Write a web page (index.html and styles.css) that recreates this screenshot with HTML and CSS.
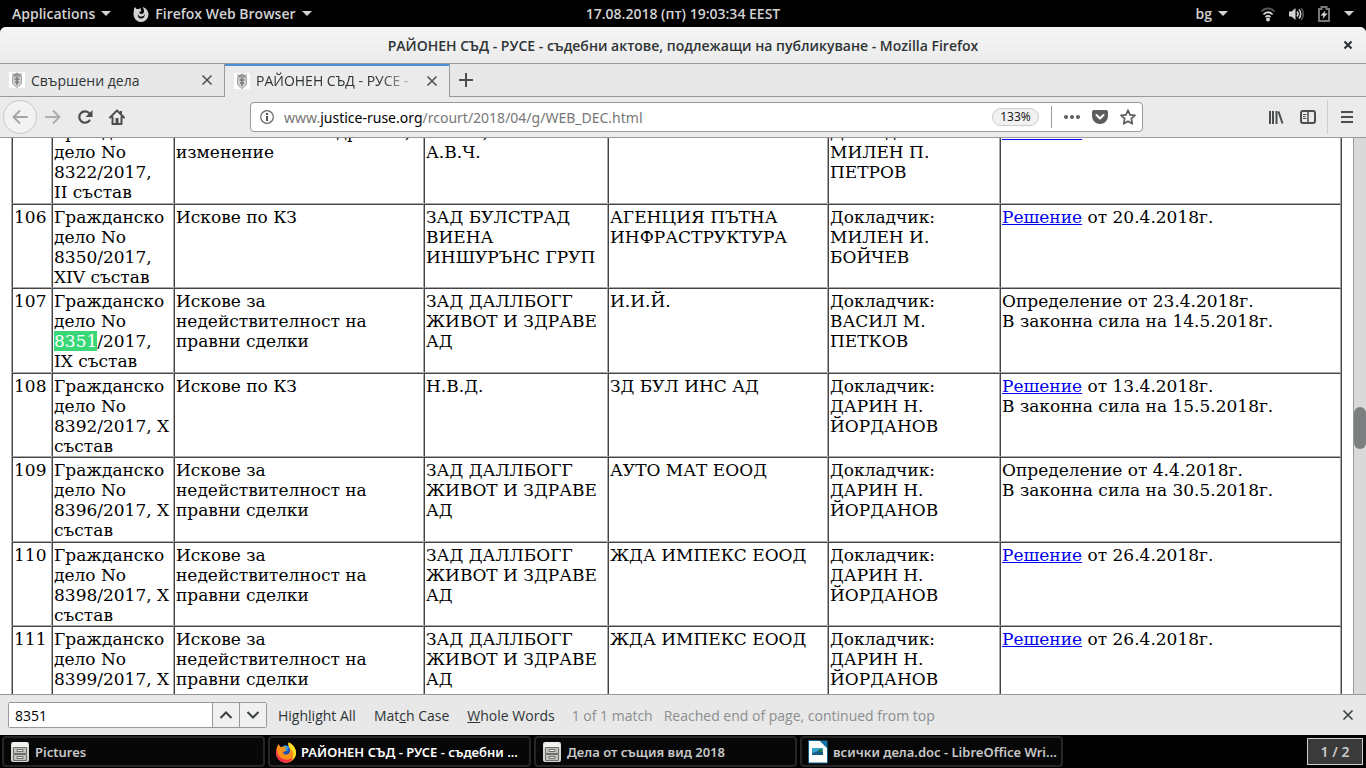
FILE: index.html
```html
<!DOCTYPE html>
<html lang="bg">
<head>
  <meta charset="UTF-8">
  <title>РАЙОНЕН СЪД - РУСЕ - съдебни актове, подлежащи на публикуване</title>
  <link rel="stylesheet" href="styles.css">
</head>
<body>
  <header class="top-panel">
    <div class="panel-side">
      <button class="panel-btn">Applications <span class="caret"></span></button>
      <button class="panel-btn">
        <svg width="16" height="16" viewBox="0 0 16 16"><path fill="#d3d3d3" d="M1 3l1-2 1.500 2h2.500l2-1.500-.5 2 1 1.500-2 1v1.500l2.500.5c1.500-.5 2-1.500 2-3 0-2-1-3-1.500-4C13 2 15.500 4.500 15.500 8.500a7.500 7.500 0 0 1-15 0C.5 6 1 5 1 3z"/><path fill="#000" d="M5 8c.5 2 2 3 4 2.500S11.500 9 12 7.500c0 3-1.500 5-4 5S4.500 10.500 5 8z"/></svg>
        Firefox Web Browser <span class="caret"></span>
      </button>
    </div>
    <div class="clock">17.08.2018 (пт) 19:03:34 EEST</div>
    <div class="panel-side panel-right">
      <button class="panel-btn lang">bg <span class="caret"></span></button>
      <button class="panel-btn status">
        <svg width="16" height="16" viewBox="0 0 16 16" fill="none" stroke-width="1.800"><path stroke="#555" d="M1.500 5.500c3.500-4 9.500-4 13 0"/><path stroke="#d3d3d3" d="M3.500 8.500c2.500-3 6.500-3 9 0M5.500 11c1.500-1.500 3.500-1.500 5 0"/><circle cx="8" cy="13.500" r="2" fill="#d3d3d3"/></svg>
        <svg width="16" height="16" viewBox="0 0 16 16" fill="none" stroke-width="1.600"><path fill="#d3d3d3" d="M1 5.500h2.500L7.500 2v12L3.500 10.500H1z"/><path stroke="#d3d3d3" d="M9 5.500c1.300 1.500 1.300 3.500 0 5M11 3.500c2.300 2.500 2.300 6.500 0 9"/><path stroke="#555" d="M13 2c3 3.500 3 8.500 0 12"/></svg>
        <svg width="16" height="18" viewBox="0 0 16 18"><path fill="none" stroke="#777" stroke-width="2" d="M3 4h2.500V2h5v2H13v12H3z"/><path fill="#ddd" d="M9.500 5.500L4.500 10.500h3L6.500 14l5-5.500h-3z"/></svg>
        <span class="caret"></span>
      </button>
    </div>
  </header>

  <main class="window">
    <div class="titlebar">
      <span class="window-title">РАЙОНЕН СЪД - РУСЕ - съдебни актове, подлежащи на публикуване - Mozilla Firefox</span>
      <button class="window-close" aria-label="Close window">
        <svg width="10" height="10" viewBox="0 0 10 10"><path stroke="#2e3436" stroke-width="2.200" d="M1.500 1.500l7 7M8.500 1.500l-7 7"/></svg>
      </button>
    </div>

    <nav class="tabs">
      <div class="tab">
        <svg class="favicon" width="16" height="16" viewBox="0 0 16 16"><path fill="#fff" d="M0 0h16v16H0z"/><path fill="#d0d0d0" stroke="#a5a5a5" d="M3.500 4.500h9V10c0 3-2.500 4-4.500 5.500C6 14 3.500 13 3.500 10z"/><path fill="#999" d="M3 1l2 1 3-1.500L11 2l2-1-1 3H4z"/><path stroke="#777" stroke-width="1.500" d="M8 5v8M5.500 7h5M6 10h4"/></svg>
        <a class="tab-label" href="#">Свършени дела</a>
        <button class="tab-close" aria-label="Close tab"><svg width="12" height="12" viewBox="0 0 12 12"><path stroke="#4c4f50" stroke-width="1.500" d="M1.500 1.500l9 9M10.500 1.500l-9 9"/></svg></button>
      </div>
      <div class="tab active">
        <svg class="favicon" width="16" height="16" viewBox="0 0 16 16"><path fill="#fff" d="M0 0h16v16H0z"/><path fill="#d0d0d0" stroke="#a5a5a5" d="M3.500 4.500h9V10c0 3-2.500 4-4.500 5.500C6 14 3.500 13 3.500 10z"/><path fill="#999" d="M3 1l2 1 3-1.500L11 2l2-1-1 3H4z"/><path stroke="#777" stroke-width="1.500" d="M8 5v8M5.500 7h5M6 10h4"/></svg>
        <a class="tab-label fade" href="#">РАЙОНЕН СЪД - РУСЕ -</a>
        <button class="tab-close" aria-label="Close tab"><svg width="12" height="12" viewBox="0 0 12 12"><path stroke="#4c4f50" stroke-width="1.500" d="M1.500 1.500l9 9M10.500 1.500l-9 9"/></svg></button>
      </div>
      <div class="tab-rest">
        <button class="icon-btn" aria-label="New tab"><svg width="14" height="14" viewBox="0 0 14 14"><path stroke="#4c4f50" stroke-width="2" d="M0 7h14M7 0v14"/></svg></button>
      </div>
    </nav>

    <div class="toolbar">
      <div class="nav-buttons">
        <button class="icon-btn back" aria-label="Back"><svg width="16" height="16" viewBox="0 0 16 16" fill="none" stroke="#a5a5a5" stroke-width="2" stroke-linecap="round" stroke-linejoin="round"><path d="M15 8H1.500M7.500 2l-6 6 6 6"/></svg></button>
        <button class="icon-btn" aria-label="Forward"><svg width="16" height="16" viewBox="0 0 16 16" fill="none" stroke="#adadad" stroke-width="2" stroke-linecap="round" stroke-linejoin="round"><path d="M1 8h13.500M8.500 2l6 6-6 6"/></svg></button>
        <button class="icon-btn" aria-label="Reload"><svg width="16" height="16" viewBox="0 0 16 16"><path fill="none" stroke="#4c4f50" stroke-width="2.200" stroke-linecap="round" d="M12.500 11.500A5.700 5.700 0 1 1 12 4"/><path fill="#4c4f50" d="M15.500 1v7h-7z"/></svg></button>
        <button class="icon-btn" aria-label="Home"><svg width="16" height="16" viewBox="0 0 16 16"><path fill="none" stroke="#4c4f50" stroke-width="2" stroke-linecap="round" stroke-linejoin="round" d="M1 8.500l7-7 7 7M3.500 8v7h9V8"/><path fill="#4c4f50" d="M6.500 9h3v6h-3zM11 2h2v4h-2z"/></svg></button>
      </div>
      <div class="url-box">
        <svg width="14" height="14" viewBox="0 0 14 14"><circle cx="7" cy="7" r="6.300" fill="none" stroke="#666" stroke-width="1.200"/><path fill="#555" d="M6 6h2v5H6zM6 3h2v2H6z"/></svg>
        <div class="url" role="textbox" aria-label="Address" tabindex="0">www.<b>justice-ruse.org</b>/rcourt/2018/04/g/WEB_DEC.html</div>
        <button class="zoom-level">133%</button>
        <span class="url-split"></span>
        <button class="icon-btn" aria-label="Page actions"><svg width="16" height="16" viewBox="0 0 16 16" fill="#5c5c5c"><circle cx="2" cy="8" r="2"/><circle cx="8" cy="8" r="2"/><circle cx="14" cy="8" r="2"/></svg></button>
        <button class="icon-btn" aria-label="Save to Pocket"><svg width="16" height="16" viewBox="0 0 16 16"><path fill="#5c5c5c" d="M2 1h12a2 2 0 0 1 2 2v4a8 8 0 0 1-16 0V3a2 2 0 0 1 2-2z"/><path fill="none" stroke="#fff" stroke-width="2" stroke-linecap="round" stroke-linejoin="round" d="M4.500 6L8 9.500 11.500 6"/></svg></button>
        <button class="icon-btn" aria-label="Bookmark"><svg width="16" height="16" viewBox="0 0 16 16"><path fill="none" stroke="#5c5c5c" stroke-width="1.700" stroke-linejoin="round" d="M8 1.200l2 4.600 5 .5-3.700 3.400 1 5L8 12.200l-4.300 2.500 1-5L1 6.300l5-.5z"/></svg></button>
      </div>
      <div class="menu-buttons">
        <button class="icon-btn" aria-label="Library"><svg width="16" height="16" viewBox="0 0 16 16" fill="none" stroke="#4c4f50" stroke-width="2"><path d="M2 2v13M5 2v13M8.500 2v13M10.500 2.500l4 12"/></svg></button>
        <button class="icon-btn" aria-label="Sidebars"><svg width="16" height="16" viewBox="0 0 16 16" fill="none" stroke="#4c4f50"><rect x="1" y="2" width="14" height="12" rx="2" stroke-width="2"/><path stroke-width="1.500" d="M8 2v12"/><path d="M3 5.500h3.500M3 7.500h2.500M3 9.500h3.500"/></svg></button>
        <button class="icon-btn menu" aria-label="Menu"><svg width="12" height="12" viewBox="0 0 12 12" stroke="#4c4f50" stroke-width="2"><path d="M0 1h12M0 6h12M0 11h12"/></svg></button>
      </div>
    </div>

    <div class="viewport">
      <div class="page">
        <table class="cases">
          <colgroup><col class="c-num"><col class="c-case"><col class="c-subject"><col class="c-plaintiff"><col class="c-defendant"><col class="c-judge"><col></colgroup>
          <tbody>
            <tr>
              <td></td>
              <td>Гражданско дело No 8322/2017, II&nbsp;състав</td>
              <td>Искове по СК - издръжка, изменение</td>
              <td>Н.В.Ч.,<br>А.В.Ч.</td>
              <td></td>
              <td>Докладчик: МИЛЕН П. ПЕТРОВ</td>
              <td><a href="#">Решение</a></td>
            </tr>
            <tr>
              <td>106</td>
              <td>Гражданско дело No 8350/2017, XIV състав</td>
              <td>Искове по КЗ</td>
              <td>ЗАД БУЛСТРАД ВИЕНА ИНШУРЪНС ГРУП</td>
              <td>АГЕНЦИЯ ПЪТНА ИНФРАСТРУКТУРА</td>
              <td>Докладчик: МИЛЕН И. БОЙЧЕВ</td>
              <td><a href="#">Решение</a> от 20.4.2018г.</td>
            </tr>
            <tr>
              <td>107</td>
              <td>Гражданско дело No <mark>8351</mark>/2017, IX състав</td>
              <td>Искове за недействителност на правни сделки</td>
              <td>ЗАД ДАЛЛБОГГ ЖИВОТ И ЗДРАВЕ АД</td>
              <td>И.И.Й.</td>
              <td>Докладчик: ВАСИЛ М. ПЕТКОВ</td>
              <td>Определение от 23.4.2018г.<br>В законна сила на 14.5.2018г.</td>
            </tr>
            <tr>
              <td>108</td>
              <td>Гражданско дело No 8392/2017, X състав</td>
              <td>Искове по КЗ</td>
              <td>Н.В.Д.</td>
              <td>ЗД БУЛ ИНС АД</td>
              <td>Докладчик: ДАРИН Н. ЙОРДАНОВ</td>
              <td><a href="#">Решение</a> от 13.4.2018г.<br>В законна сила на 15.5.2018г.</td>
            </tr>
            <tr>
              <td>109</td>
              <td>Гражданско дело No 8396/2017, X състав</td>
              <td>Искове за недействителност на правни сделки</td>
              <td>ЗАД ДАЛЛБОГГ ЖИВОТ И ЗДРАВЕ АД</td>
              <td>АУТО МАТ ЕООД</td>
              <td>Докладчик: ДАРИН Н. ЙОРДАНОВ</td>
              <td>Определение от 4.4.2018г.<br>В законна сила на 30.5.2018г.</td>
            </tr>
            <tr>
              <td>110</td>
              <td>Гражданско дело No 8398/2017, X състав</td>
              <td>Искове за недействителност на правни сделки</td>
              <td>ЗАД ДАЛЛБОГГ ЖИВОТ И ЗДРАВЕ АД</td>
              <td>ЖДА ИМПЕКС ЕООД</td>
              <td>Докладчик: ДАРИН Н. ЙОРДАНОВ</td>
              <td><a href="#">Решение</a> от 26.4.2018г.</td>
            </tr>
            <tr>
              <td>111</td>
              <td>Гражданско дело No 8399/2017, X състав</td>
              <td>Искове за недействителност на правни сделки</td>
              <td>ЗАД ДАЛЛБОГГ ЖИВОТ И ЗДРАВЕ АД</td>
              <td>ЖДА ИМПЕКС ЕООД</td>
              <td>Докладчик: ДАРИН Н. ЙОРДАНОВ</td>
              <td><a href="#">Решение</a> от 26.4.2018г.</td>
            </tr>
          </tbody>
        </table>
      </div>
      <div class="scrollbar"><div class="thumb"></div></div>
    </div>

    <div class="findbar">
      <div class="find-group">
        <input class="find-input" type="text" value="8351" aria-label="Find in page">
        <button class="find-step" aria-label="Previous"><svg width="14" height="10" viewBox="0 0 14 10"><path fill="none" stroke="#3b4042" stroke-width="2" d="M1.500 8L7 2.500 12.500 8"/></svg></button>
        <button class="find-step" aria-label="Next"><svg width="14" height="10" viewBox="0 0 14 10"><path fill="none" stroke="#3b4042" stroke-width="2" d="M1.500 2L7 7.500 12.500 2"/></svg></button>
      </div>
      <div class="find-options">
        <button>High<u>l</u>ight All</button>
        <button>Mat<u>c</u>h Case</button>
        <button><u>W</u>hole Words</button>
      </div>
      <div class="find-status">
        <span>1 of 1 match</span>
        <span>Reached end of page, continued from top</span>
      </div>
      <button class="find-close" aria-label="Close find bar"><svg width="12" height="12" viewBox="0 0 12 12"><path stroke="#3b4042" stroke-width="1.600" d="M1.500 1.500l9 9M10.500 1.500l-9 9"/></svg></button>
    </div>
  </main>

  <footer class="taskbar">
    <button class="task">
      <svg width="22" height="22" viewBox="0 0 22 22"><rect x="2" y="1" width="18" height="20" rx="2" fill="#d6d6d2"/><path fill="#f1f1ee" d="M4 1h14l2 5H2z"/><g fill="#c2c2be" stroke="#6d6d6a"><path d="M4.500 6.500h13v6h-13zM4.500 13.500h13v6h-13z"/><path fill="#eee" d="M8 8.500h6v2H8zM8 15.500h6v2H8z"/></g></svg>
      <span class="task-label">Pictures</span>
    </button>
    <button class="task current">
      <svg width="22" height="22" viewBox="0 0 22 22"><circle cx="11" cy="11.500" r="7" fill="#2451b8"/><path fill="#1d9bf0" d="M7 6c2-2 5-2 7 0l-2 4H8z"/><path fill="#ff9016" d="M3.500 3l2 3h3l3-1-1.500 3 1 2-3 1c0 2 2 3 4 2.500 2-.5 3-2 3-4 0-3-2-4-1.500-8 3 1 7.500 5 7.500 10A10 10 0 0 1 1 12C1 8 2 6 3.500 3z"/><path fill="#f6304b" d="M2 7c0 7 3 10.500 8 11.500 4 .7 7-1 8-3-1 4-4 6-7.500 6C4 21.500-1 15 2 7z"/><path fill="#ffe226" d="M13.500 1.500c4 1 8 6 7.500 11.500-.5 3-2 5-4 6 2-4 2-8-1-10.500-2-2-3-4-2.500-7z"/></svg>
      <span class="task-label">РАЙОНЕН СЪД - РУСЕ - съдебни ...</span>
    </button>
    <button class="task">
      <svg width="22" height="22" viewBox="0 0 22 22"><rect x="2" y="1" width="18" height="20" rx="2" fill="#d6d6d2"/><path fill="#f1f1ee" d="M4 1h14l2 5H2z"/><g fill="#c2c2be" stroke="#6d6d6a"><path d="M4.500 6.500h13v6h-13zM4.500 13.500h13v6h-13z"/><path fill="#eee" d="M8 8.500h6v2H8zM8 15.500h6v2H8z"/></g></svg>
      <span class="task-label">Дела от същия вид 2018</span>
    </button>
    <button class="task">
      <svg width="22" height="24" viewBox="0 0 22 24"><path fill="#fff" stroke="#0d5f91" d="M1.500.5H13l7.500 7.500v15h-19z"/><path fill="#0e76ab" d="M13 .5h7.500V8z"/><path fill="#3ba3d0" d="M5 8h11v7H5z"/><path fill="#145d86" d="M5 13l4-1 3-2 4 2v3H5z"/><path fill="#2a7a3c" d="M12 9h3v3h-3z"/></svg>
      <span class="task-label">всички дела.doc - LibreOffice Wri...</span>
    </button>
    <button class="workspace">1 / 2</button>
  </footer>
</body>
</html>
```
FILE: styles.css
```css
* {
  box-sizing: border-box;
}
body {
  margin: 0;
  height: 100vh;
  display: flex;
  flex-direction: column;
  overflow: hidden;
  background: #000;
  font-family: "Noto Sans", "Open Sans", sans-serif;
  font-size: 14px;
  color: #2e3436;
}
button {
  font: inherit;
  color: inherit;
  background: none;
  border: none;
  padding: 0;
}
svg {
  display: block;
  flex: none;
}

/* top panel */
.top-panel {
  display: flex;
  align-items: center;
  height: 27px;
  flex: none;
  color: #d3d3d3;
  font-family: "Open Sans", sans-serif;
  font-weight: 600;
}
.panel-side {
  flex: 1;
  display: flex;
  gap: 22px;
  padding: 0 12px;
}
.panel-right {
  justify-content: flex-end;
  gap: 32px;
}
.panel-btn {
  display: flex;
  align-items: center;
  gap: 6px;
}
.status {
  gap: 12px;
}
.caret {
  border: 5px solid transparent;
  border-top-color: #d3d3d3;
  border-bottom: none;
}

/* browser window */
.window {
  flex: 1;
  min-height: 0;
  display: flex;
  flex-direction: column;
  background: #ebebeb;
  border-radius: 6px 6px 0 0;
}
.titlebar {
  display: flex;
  align-items: center;
  height: 37px;
  flex: none;
  padding: 0 13px;
  border-bottom: 1px solid #999;
  border-radius: 6px 6px 0 0;
  background: linear-gradient(#f6f6f6, #ebebeb);
}
.window-title {
  flex: 1;
  padding-left: 10px;
  text-align: center;
  font-family: "Open Sans", sans-serif;
  font-weight: 600;
}
.tabs {
  display: flex;
  height: 33px;
  flex: none;
  background: #e8e8e8;
  font-family: "Open Sans", sans-serif;
}
.tab {
  display: flex;
  align-items: center;
  width: 224px;
  padding: 0 11px 0 9px;
  gap: 6px;
  border-bottom: 1px solid #999;
}
.tab.active {
  width: 226px;
  background: #ebebeb;
  border: 1px solid #999;
  border-width: 0 1px;
  box-shadow: inset 0 2px #4a90d9;
}
.tab-label {
  flex: 1;
  overflow: hidden;
  white-space: nowrap;
  color: inherit;
  text-decoration: none;
}
.fade {
  -webkit-mask-image: linear-gradient(to left, transparent, #000 40px);
  mask-image: linear-gradient(to left, transparent, #000 40px);
}
.tab-rest {
  flex: 1;
  display: flex;
  padding-left: 9px;
  border-bottom: 1px solid #999;
}
.toolbar {
  display: flex;
  align-items: center;
  height: 41px;
  flex: none;
  border-bottom: 1px solid #999;
}
.nav-buttons {
  display: flex;
  align-items: center;
  gap: 16px;
  width: 250px;
  padding-left: 3px;
}
.icon-btn {
  display: flex;
  align-items: center;
}
.back {
  justify-content: center;
  width: 34px;
  height: 34px;
  margin-right: -8px;
  border: 1px solid #c8c8c8;
  border-radius: 50%;
  background: #f2f2f2;
}
.url-box {
  flex: 1;
  display: flex;
  align-items: center;
  gap: 12px;
  height: 30px;
  padding: 0 6px 0 9px;
  border: 1px solid #999;
  border-radius: 4px;
  background: #fff;
}
.url {
  flex: 1;
  margin-left: -2px;
  color: #777;
}
.url b {
  font-weight: normal;
  color: #000;
}
.zoom-level {
  width: 47px;
  height: 18px;
  border: 1px solid #ccc;
  border-radius: 9px;
  background: #f1f1f1;
  color: #222;
  font-size: 12px;
  line-height: 16px;
}
.url-split {
  width: 1px;
  height: 22px;
  background: #999;
}
.menu-buttons {
  display: flex;
  align-items: center;
  justify-content: flex-end;
  gap: 16px;
  width: 223px;
  padding-right: 13px;
}
.menu {
  height: 34px;
  margin-left: -5px;
  padding-left: 13px;
  border-left: 1px solid #ccc;
}

/* court page */
.viewport {
  flex: 1;
  min-height: 0;
  display: flex;
}
.page {
  flex: 1;
  overflow: hidden;
  padding: 0 11px;
  background: #fff;
}
/* scrolled part way through the first row */
.cases {
  width: 100%;
  margin-top: -19px;
  table-layout: fixed;
  border-collapse: separate;
  border-spacing: 0;
  border-left: 1px solid #aaa;
  border-right: 1px solid #444;
  font-family: "DejaVu Serif", serif;
  font-size: 17px;
  line-height: 20px;
  color: #000;
}
.cases td {
  height: 85px;
  padding: 2px 1px 0;
  vertical-align: top;
  border: 1px solid #444;
  border-right-color: #aaa;
  border-bottom-color: #aaa;
}
.cases tr:nth-child(even) td {
  height: 84px;
}
.cases a {
  color: #00e;
}
.c-num { width: 40px; }
.c-case { width: 122px; }
.c-subject { width: 250px; }
.c-plaintiff { width: 184px; }
.c-defendant { width: 220px; }
.c-judge { width: 172px; }
mark {
  background: #38d878;
  color: #fff;
}
.scrollbar {
  width: 13px;
  padding-top: 269px;
  border-left: 1px solid #999;
  background: #d9d9d9;
}
.thumb {
  height: 42px;
  border-radius: 6px;
  background: #7b7f80;
}

/* find bar */
.findbar {
  display: flex;
  align-items: center;
  gap: 11px;
  height: 41px;
  flex: none;
  padding: 0 12px 0 8px;
  border-top: 1px solid #999;
  background: #e8e8e8;
  font-family: "Open Sans", sans-serif;
}
.find-group {
  display: flex;
  height: 26px;
  border: 1px solid #999;
  border-radius: 2px;
}
.find-input {
  width: 203px;
  padding: 0 6px;
  border: none;
  background: #fff;
  font: inherit;
  color: #000;
}
.find-step {
  display: flex;
  align-items: center;
  justify-content: center;
  width: 27px;
  border-left: 1px solid #999;
  background: #f0f0f0;
}
.find-options {
  display: flex;
  gap: 18px;
  padding-right: 6px;
}
.find-status {
  display: flex;
  gap: 11px;
  color: #8b8e8f;
}
.find-close {
  margin-left: auto;
}

/* task bar */
.taskbar {
  display: flex;
  align-items: center;
  gap: 3px;
  height: 33px;
  flex: none;
  padding: 0 3px 0 2px;
  color: #c8c8c8;
  font-weight: 600;
}
.task {
  display: flex;
  align-items: center;
  gap: 4px;
  width: 263px;
  height: 31px;
  padding: 0 5px;
  border: 2px solid #262626;
  border-radius: 4px;
  background: #070707;
  font-size: 13px;
}
.task.current {
  color: #fff;
}
.task-label {
  white-space: nowrap;
}
.workspace {
  width: 56px;
  height: 27px;
  margin-left: auto;
  border: 1px solid #ccc;
  background: #3a3a3a;
}
```
